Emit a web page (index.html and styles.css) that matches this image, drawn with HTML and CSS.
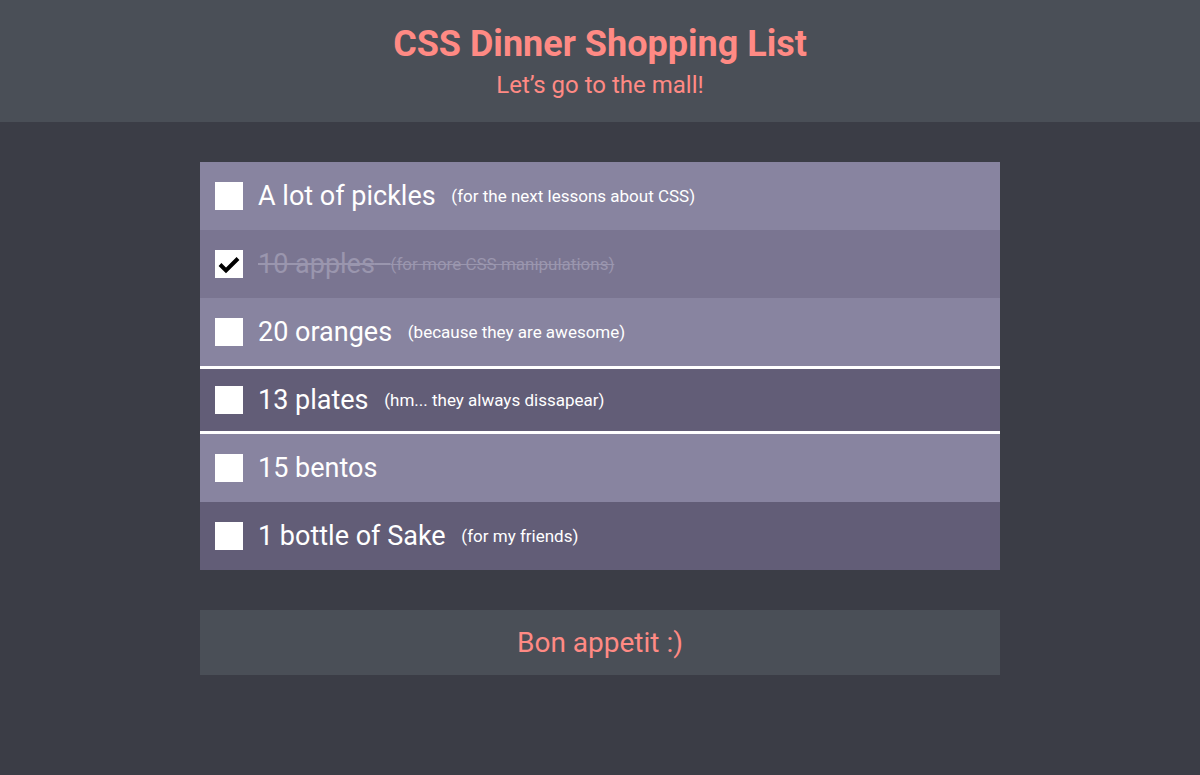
FILE: index.html
```html
<!DOCTYPE html>
<html>
<head>
<meta charset="utf-8">
<link rel="stylesheet" href="styles.css">
</head>
<body>
<header class="header">
  <h1 class="title">CSS Dinner Shopping List</h1>
  <p class="subtitle">Let’s go to the mall!</p>
</header>
<main class="main">
  <ul class="list">
    <li class="item light"><span class="box"></span><span class="label"><span class="name">A lot of pickles</span> <span class="note">(for the next lessons about CSS)</span></span></li>
    <li class="item done"><span class="box"><svg viewBox="0 0 28 28" width="28" height="28"><path d="M5 14.5 L11 20.5 L23 8.5" fill="none" stroke="#000" stroke-width="4"/></svg></span><span class="label"><span class="name">10 apples</span> <span class="note">(for more CSS manipulations)</span></span></li>
    <li class="item light"><span class="box"></span><span class="label"><span class="name">20 oranges</span> <span class="note">(because they are awesome)</span></span></li>
    <li class="item dark bordered"><span class="box"></span><span class="label"><span class="name">13 plates</span> <span class="note">(hm... they always dissapear)</span></span></li>
    <li class="item light"><span class="box"></span><span class="label"><span class="name">15 bentos</span></span></li>
    <li class="item dark"><span class="box"></span><span class="label"><span class="name">1 bottle of Sake</span> <span class="note">(for my friends)</span></span></li>
  </ul>
  <footer class="footer">Bon appetit :)</footer>
</main>
</body>
</html>
```
FILE: styles.css
```css
* { box-sizing: border-box; }
html, body { margin: 0; padding: 0; }
body {
  background: #3b3d46;
  font-family: Roboto, "Liberation Sans", sans-serif;
  min-height: 775px;
}
.header {
  background: #4a4f57;
  height: 122px;
  text-align: center;
  padding-top: 23px;
}
.title {
  margin: 0;
  color: #ff8a84;
  font-size: 36px;
  font-weight: 700;
  line-height: 42px;
}
.subtitle {
  margin: 0;
  margin-top: 1px;
  color: #ff8a84;
  font-size: 24px;
  line-height: 38px;
}
.main {
  width: 800px;
  margin: 40px auto 0;
}
.list {
  list-style: none;
  margin: 0;
  padding: 0;
}
.item {
  height: 68px;
  display: flex;
  align-items: center;
  padding-left: 15px;
  color: #fff;
}
.light { background: #8884a0; }
.done { background: #7a7591; }
.dark { background: #625d77; }
.bordered {
  border-top: 3px solid #fff;
  border-bottom: 3px solid #fff;
}
.box {
  width: 28px;
  height: 28px;
  background: #fff;
  flex: none;
  display: block;
}
.box svg { display: block; }
.label {
  display: block;
  margin-left: 15px;
  font-size: 27px;
  line-height: 32px;
  word-spacing: 9px;
  white-space: nowrap;
}
.name {
  word-spacing: normal;
}
.note {
  display: inline-block;
  word-spacing: normal;
  font-size: 17px;
  line-height: 20px;
  vertical-align: 3.5px;
}
.done .label {
  color: #9a96ae;
  text-decoration: line-through;
}
.done .note {
  text-decoration: line-through;
}
.footer {
  margin-top: 40px;
  height: 65px;
  background: #4a4f57;
  color: #ff8a84;
  font-size: 28px;
  display: flex;
  align-items: center;
  justify-content: center;
}
```
